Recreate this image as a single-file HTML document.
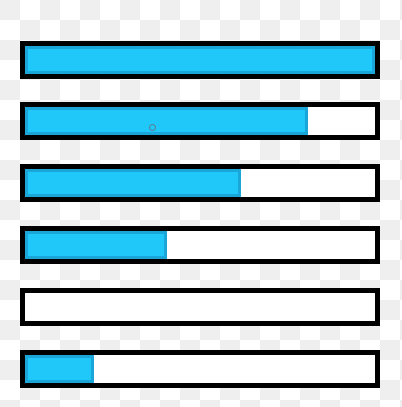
<!DOCTYPE html><html><head><style>
html,body{margin:0;padding:0}
body{width:402px;height:407px;position:relative;overflow:hidden;background-color:#fff;
background-image:linear-gradient(45deg,#efefef 25%,transparent 25%,transparent 75%,#efefef 75%),linear-gradient(45deg,#efefef 25%,transparent 25%,transparent 75%,#efefef 75%);
background-size:40px 40px;background-position:20px 0,0 20px;}
.bar{position:absolute;left:20px;width:350px;height:28px;border:5px solid #000;background:#fff;}
.f{position:absolute;left:0;top:0;bottom:0;background:#1fc8f8;box-shadow:inset 0 0 0 3px #1aa6d8;}
.dot{position:absolute;left:149px;top:124px;width:5px;height:5px;border:1px solid #5a7f99;border-radius:50%;}
</style></head><body>
<div class="bar" style="top:41px"><div class="f" style="width:350px"></div></div>
<div class="bar" style="top:102px"><div class="f" style="width:283px"></div></div>
<div class="bar" style="top:164px"><div class="f" style="width:216px"></div></div>
<div class="bar" style="top:226px"><div class="f" style="width:142px"></div></div>
<div class="bar" style="top:288px"></div>
<div class="bar" style="top:350px"><div class="f" style="width:69px"></div></div>
<div class="dot"></div>
</body></html>
